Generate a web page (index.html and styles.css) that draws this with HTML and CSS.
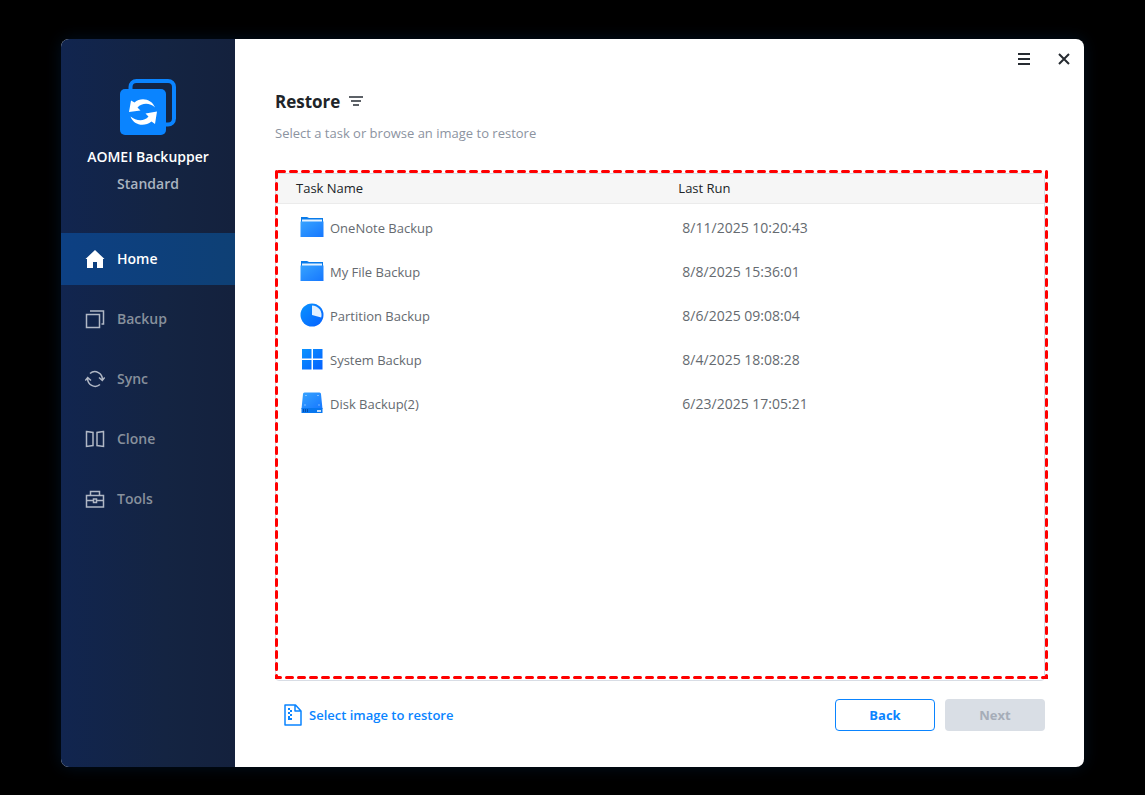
FILE: index.html
```html
<!DOCTYPE html>
<html lang="en">
<head>
    <meta charset="UTF-8">
    <meta name="viewport" content="width=device-width, initial-scale=1.0">
    <title>AOMEI Backupper</title>
    <link rel="stylesheet" href="styles.css">
</head>
<body>
    <div class="window">
        <aside class="sidebar">
            <div class="brand">
                <svg class="brand-logo" viewBox="0 0 56 56" aria-hidden="true">
                    <rect x="10.500" y="2" width="43.500" height="43.500" rx="6" fill="none" stroke="#0a84ff" stroke-width="4"/>
                    <rect x="0" y="10" width="46" height="46" rx="5" fill="#0a84ff"/>
                    <path fill="#fff" d="M35 28.500C32 20 21 17.500 14.500 23.500L11 21.500L9 33L20.500 31.500L17.500 28.500C22 23.500 30 23.500 35 28.500Z"/>
                    <path fill="#fff" d="M10.500 37.500C13.500 46 24 48.500 31.500 42.500L35 45L37 32.500L25.500 34.500L28.500 37.500C24 43 16 42 10.500 37.500Z"/>
                </svg>
                <div class="brand-name">AOMEI Backupper</div>
                <div class="brand-edition">Standard</div>
            </div>
            <nav class="menu">
                <a href="#" class="menu-item active">
                    <svg viewBox="0 0 20 20" aria-hidden="true"><path fill="#fff" d="M10 1L0.500 10H2V19H8V13H12V19H18V10H19.500Z"/></svg>
                    Home
                </a>
                <a href="#" class="menu-item">
                    <svg viewBox="0 0 20 20" aria-hidden="true"><path d="M1.500 5.500H14.500V18.500H1.500ZM5 2H18.500V15H16.500"/></svg>
                    Backup
                </a>
                <a href="#" class="menu-item">
                    <svg viewBox="0 0 20 20" aria-hidden="true"><path d="M5 4.500A7.500 7.500 0 0 1 17.300 11M15 15.500A7.500 7.500 0 0 1 2.700 9M14 8.500L17.300 11.500L19.700 8.500M0.300 11.500L2.700 8.500L6 11.500"/></svg>
                    Sync
                </a>
                <a href="#" class="menu-item">
                    <svg viewBox="0 0 20 20" aria-hidden="true"><path d="M1.500 2.500L8 3.500V16.500L1.500 17.500ZM18.500 2.500L12 3.500V16.500L18.500 17.500Z"/></svg>
                    Clone
                </a>
                <a href="#" class="menu-item">
                    <svg viewBox="0 0 20 20" aria-hidden="true"><path d="M1.500 6.500H18.500V18H1.500ZM5.500 6.500V2.500H14.500V6.500M1.500 11.500H8M12 11.500H18.500M8.500 10H11.500V13.500H8.500Z"/></svg>
                    Tools
                </a>
            </nav>
        </aside>

        <main class="content">
            <div class="window-buttons">
                <button type="button" aria-label="Menu">
                    <svg viewBox="0 0 14 14"><path d="M1 2H13M1 7H13M1 12H13"/></svg>
                </button>
                <button type="button" aria-label="Close">
                    <svg viewBox="0 0 14 14"><path d="M2 2L12 12M12 2L2 12"/></svg>
                </button>
            </div>

            <div class="heading">
                <h1>Restore</h1>
                <button type="button" class="filter" aria-label="Filter">
                    <svg viewBox="0 0 14 12"><path d="M0 1H14M2 5H12M4 9H10"/></svg>
                </button>
            </div>
            <p class="subtitle">Select a task or browse an image to restore</p>

            <div class="panel">
                <table class="tasks">
                    <thead>
                        <tr>
                            <th>Task Name</th>
                            <th>Last Run</th>
                        </tr>
                    </thead>
                    <tbody>
                        <tr>
                            <td>
                                <div class="task">
                                    <svg viewBox="0 0 24 24" aria-hidden="true">
                                        <defs>
                                            <linearGradient id="blue" x1="0" y1="0" x2="1" y2="1">
                                                <stop offset="0" stop-color="#36a3ff"/>
                                                <stop offset="1" stop-color="#1677ff"/>
                                            </linearGradient>
                                            <linearGradient id="deep" x1="0" y1="0" x2="1" y2="1">
                                                <stop offset="0" stop-color="#0a94ff"/>
                                                <stop offset="1" stop-color="#0560ff"/>
                                            </linearGradient>
                                        </defs>
                                        <path fill="#087bea" d="M1 2H7L9 3H23V8H1Z"/>
                                        <path fill="#e4f2ff" d="M2 4.500H22V7H2Z"/>
                                        <path fill="url(#blue)" d="M0.500 6.500H23.500V22H0.500Z"/>
                                    </svg>
                                    OneNote Backup
                                </div>
                            </td>
                            <td>8/11/2025 10:20:43</td>
                        </tr>
                        <tr>
                            <td>
                                <div class="task">
                                    <svg viewBox="0 0 24 24" aria-hidden="true">
                                        <path fill="#087bea" d="M1 2H7L9 3H23V8H1Z"/>
                                        <path fill="#e4f2ff" d="M2 4.500H22V7H2Z"/>
                                        <path fill="url(#blue)" d="M0.500 6.500H23.500V22H0.500Z"/>
                                    </svg>
                                    My File Backup
                                </div>
                            </td>
                            <td>8/8/2025 15:36:01</td>
                        </tr>
                        <tr>
                            <td>
                                <div class="task">
                                    <svg viewBox="0 0 24 24" aria-hidden="true">
                                        <circle cx="12" cy="12" r="11.500" fill="url(#deep)"/>
                                        <path fill="#e3f1ff" d="M12 2.500A9.500 9.500 0 0 1 21.200 14.500L12 12Z"/>
                                    </svg>
                                    Partition Backup
                                </div>
                            </td>
                            <td>8/6/2025 09:08:04</td>
                        </tr>
                        <tr>
                            <td>
                                <div class="task">
                                    <svg viewBox="0 0 24 24" aria-hidden="true">
                                        <path fill="url(#deep)" d="M2 2H11.500V11.500H2ZM13 2H22.500V11.500H13ZM2 13H11.500V22.500H2ZM13 13H22.500V22.500H13Z"/>
                                    </svg>
                                    System Backup
                                </div>
                            </td>
                            <td>8/4/2025 18:08:28</td>
                        </tr>
                        <tr>
                            <td>
                                <div class="task">
                                    <svg viewBox="0 0 24 24" aria-hidden="true">
                                        <path fill="url(#blue)" d="M4.500 1.500H19.500Q21 1.500 21 3L22.500 18H1.500L3 3Q3 1.500 4.500 1.500Z"/>
                                        <path fill="#0877ef" d="M1.500 17H22.500V22H1.500Z"/>
                                        <path stroke="#fff" stroke-width="1.500" d="M17 20H21"/>
                                        <path stroke="#064fae" d="M3.500 18V21M5.500 18V21M7.500 18V21"/>
                                        <path fill="#d4eaff" d="M5.500 4h1v1h-1zM17.500 4h1v1h-1zM4.500 13.500h1v1h-1zM18.500 13.500h1v1h-1z"/>
                                    </svg>
                                    Disk Backup(2)
                                </div>
                            </td>
                            <td>6/23/2025 17:05:21</td>
                        </tr>
                    </tbody>
                </table>
                <svg class="highlight" aria-hidden="true"><rect x="1.500" y="1.500"/></svg>
            </div>

            <div class="footer">
                <a href="#" class="select-image">
                    <svg viewBox="0 0 18 22" aria-hidden="true">
                        <path fill="none" stroke="#0a84ff" stroke-width="1.500" stroke-linejoin="round" d="M1 1H11.500L17 7V21H1ZM11 1V7H17"/>
                        <path fill="#0a84ff" d="M4 4h2v2h-2zM6 6h2v2h-2zM4 8h2v2h-2zM6 10h2v2h-2zM4 12h2v2h-2zM4 14h4v2h-4z"/>
                    </svg>
                    Select image to restore
                </a>
                <button type="button" class="btn btn-back">Back</button>
                <button type="button" class="btn btn-next" disabled>Next</button>
            </div>
        </main>
    </div>
</body>
</html>
```

FILE: styles.css
```css
* {
    box-sizing: border-box;
}
body {
    display: flex;
    min-height: 100vh;
    margin: 0;
    padding: 39px 61px 28px;
    background: #000;
    font-family: "Open Sans", "Noto Sans", sans-serif;
    font-size: 13px;
    line-height: 20px;
    color: #202428;
}
button {
    font: inherit;
    border: none;
    padding: 0;
    background: none;
    cursor: pointer;
}
a {
    text-decoration: none;
}
svg {
    display: block;
    flex: none;
}
.window {
    display: flex;
    flex: 1;
    border-radius: 8px;
    overflow: hidden;
    background: #fff;
    box-shadow: 0 0 16px #001020;
}

/* sidebar */
.sidebar {
    flex: none;
    width: 174px;
    background: linear-gradient(to right, #11254f, #142442 60%, #14213d);
    font-size: 14px;
    font-weight: 600;
}
.brand {
    display: flex;
    flex-direction: column;
    align-items: center;
    height: 194px;
    padding-top: 40px;
}
.brand-logo {
    width: 56px;
    height: 56px;
    margin-bottom: 12px;
}
.brand-name {
    color: #fff;
}
.brand-edition {
    margin-top: 7px;
    color: #aab4c0;
}
.menu {
    display: flex;
    flex-direction: column;
    gap: 8px;
}
.menu-item {
    display: flex;
    align-items: center;
    gap: 12px;
    height: 52px;
    padding-left: 24px;
    color: #87909c;
}
.menu-item svg {
    width: 20px;
    height: 20px;
    fill: none;
}
.menu-item:not(.active) svg {
    stroke: #b1b8c5;
    stroke-width: 1.5px;
}
.menu-item.active {
    background: linear-gradient(to right, #0d4083, #0e4075);
    color: #fff;
}

/* main area */
.content {
    display: flex;
    flex: 1;
    flex-direction: column;
    padding: 8px 39px 36px 40px;
}
.window-buttons {
    display: flex;
    justify-content: flex-end;
    gap: 16px;
    margin-right: -31px;
}
.window-buttons button {
    display: flex;
    align-items: center;
    justify-content: center;
    width: 24px;
    height: 24px;
}
.window-buttons svg {
    width: 14px;
    height: 14px;
    stroke: #262b31;
    stroke-width: 2px;
}
.heading {
    display: flex;
    align-items: center;
    gap: 9px;
    margin-top: 19px;
}
.heading h1 {
    margin: 0;
    font-size: 17px;
    line-height: 24px;
    font-weight: 700;
}
.filter svg {
    width: 14px;
    height: 12px;
    stroke: #5c6167;
    stroke-width: 2px;
}
.subtitle {
    margin: 9px 0 30px;
    color: #8c939f;
}
.panel {
    position: relative;
    flex: 1;
    border: 1px solid #d8dde5;
    border-radius: 4px;
}
.highlight {
    position: absolute;
    top: -4px;
    left: -1px;
    width: calc(100% + 5px);
    height: calc(100% + 3px);
    pointer-events: none;
}
.highlight rect {
    width: calc(100% - 3px);
    height: calc(100% - 3px);
    fill: none;
    stroke: #f00;
    stroke-width: 3px;
    stroke-linecap: round;
    stroke-dasharray: 6 6;
    stroke-dashoffset: -2px;
}
.tasks {
    width: 100%;
    table-layout: fixed;
    border-collapse: collapse;
}
.tasks th {
    height: 29px;
    padding: 0 0 0 3px;
    background: #f6f6f6;
    border-bottom: 1px solid #ebebeb;
    font-weight: 400;
    text-align: left;
}
.tasks th:first-child {
    width: 52%;
    padding-left: 20px;
}
.tasks td {
    height: 44px;
    padding: 5px 0 0 7px;
    font-size: 14px;
    color: #656a70;
}
.tasks td:first-child {
    padding-left: 24px;
    font-size: 13px;
}
.task {
    display: flex;
    align-items: center;
    gap: 6px;
}
.task svg {
    width: 24px;
    height: 24px;
    margin-bottom: 2px;
}

/* bottom row */
.footer {
    display: flex;
    align-items: center;
    gap: 10px;
    margin-top: 18px;
}
.select-image {
    display: flex;
    align-items: center;
    gap: 7px;
    margin-right: auto;
    padding-left: 9px;
    font-weight: 600;
    color: #0a84ff;
}
.select-image svg {
    width: 18px;
    height: 22px;
}
.btn {
    width: 100px;
    height: 32px;
    border-radius: 4px;
    font-weight: 700;
}
.btn-back {
    border: 1px solid #0a84ff;
    background: #fff;
    color: #0a84ff;
}
.btn-next {
    background: #d9dee5;
    color: #a6adb8;
    cursor: default;
}
```
